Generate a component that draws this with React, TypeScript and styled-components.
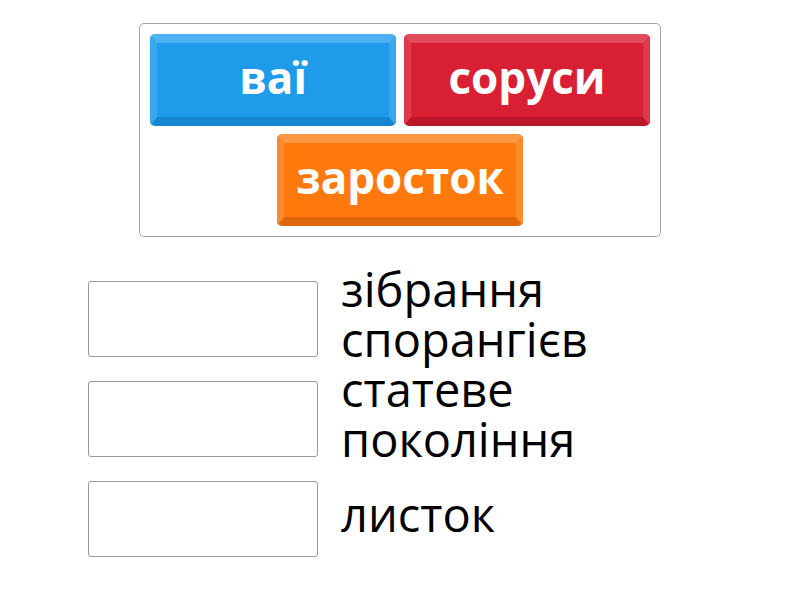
import React from "react";
import styled, { createGlobalStyle } from "styled-components";

const Global = createGlobalStyle`
  html, body { margin: 0; padding: 0; background: #fff; }
  body { font-family: "Open Sans", "Noto Sans", sans-serif; }
`;

const Page = styled.div`
  width: 800px;
  height: 600px;
  display: flex;
  flex-direction: column;
  align-items: center;
`;

const Tray = styled.div`
  margin-top: 23px;
  width: 522px;
  box-sizing: border-box;
  border: 1px solid #a3a3a3;
  border-radius: 5px;
  padding: 10px 9px 10px 9px;
  display: flex;
  flex-wrap: wrap;
  justify-content: center;
  gap: 8px;
`;

type Tone = { main: string; top: string; side: string; bottom: string };

const tones: Record<string, Tone> = {
  blue: { main: "#1f9be9", top: "#4cb0f1", side: "#38a7ee", bottom: "#1686d3" },
  red: { main: "#d91f34", top: "#e24b5c", side: "#df3a4c", bottom: "#bb1729" },
  orange: { main: "#ff790c", top: "#ff9744", side: "#ff8a2b", bottom: "#e1650a" },
};

const Tile = styled.div<{ $tone: Tone }>`
  width: 246px;
  height: 92px;
  box-sizing: border-box;
  border-radius: 5px;
  border-style: solid;
  border-width: 9px 7px 9px 7px;
  border-color: ${(p) => `${p.$tone.top} ${p.$tone.side} ${p.$tone.bottom} ${p.$tone.side}`};
  background: ${(p) => p.$tone.main};
  display: flex;
  align-items: center;
  justify-content: center;
  color: #fff;
  font-weight: 700;
  font-size: 44px;
  line-height: 1;
  padding-bottom: 6px;
`;

const Rows = styled.div`
  margin-top: 32px;
  width: 800px;
  display: flex;
  flex-direction: column;
`;

const Row = styled.div`
  height: 100px;
  display: flex;
  align-items: center;
  padding-left: 88px;
  gap: 25px;
`;

const Slot = styled.div`
  width: 230px;
  height: 76px;
  box-sizing: border-box;
  border: 1px solid #9a9a9a;
  border-radius: 3px;
  background: #fff;
  flex: none;
`;

const Label = styled.div`
  font-size: 47px;
  line-height: 50px;
  color: #000;
  width: 330px;
  margin-top: -10px;
  margin-left: -2px;
`;

export default function App() {
  return (
    <Page>
      <Global />
      <Tray>
        <Tile $tone={tones.blue}>ваї</Tile>
        <Tile $tone={tones.red}>соруси</Tile>
        <Tile $tone={tones.orange}>заросток</Tile>
      </Tray>
      <Rows>
        <Row>
          <Slot />
          <Label>зібрання спорангієв</Label>
        </Row>
        <Row>
          <Slot />
          <Label>статеве покоління</Label>
        </Row>
        <Row>
          <Slot />
          <Label>листок</Label>
        </Row>
      </Rows>
    </Page>
  );
}
